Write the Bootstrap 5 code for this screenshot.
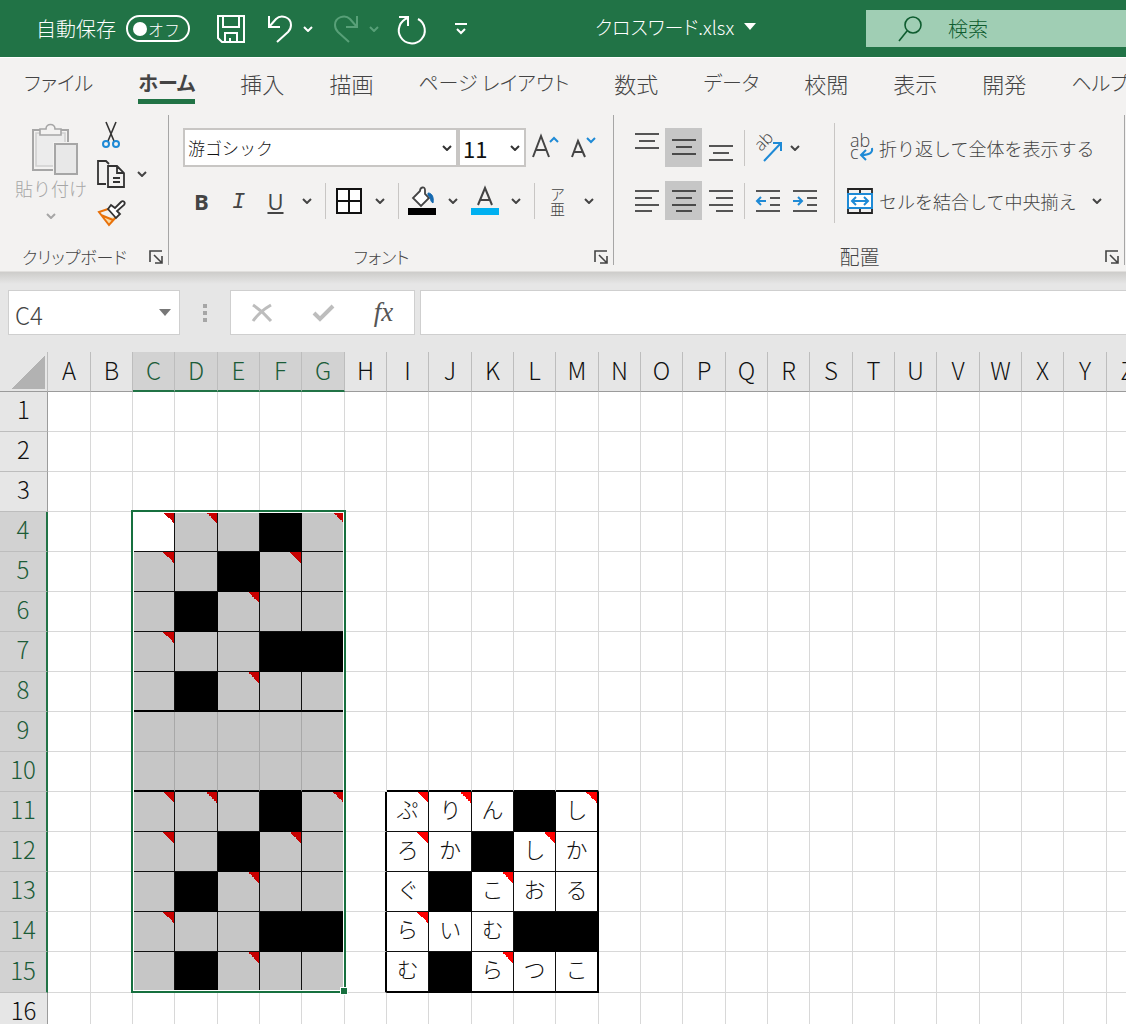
<!DOCTYPE html>
<html lang="ja">
<head>
<meta charset="utf-8">
<meta name="viewport" content="width=device-width, initial-scale=1">
<title>クロスワード.xlsx</title>
<link rel="stylesheet" href="https://cdn.jsdelivr.net/npm/bootstrap@5.3.0/dist/css/bootstrap.min.css">
<style>
:root{--xl-green:#217346;--xl-ink:#444;--xl-blue:#1e8ad6;--xl-chrome:#f3f2f1;--xl-head:#e6e6e6}
body{font-family:"Noto Sans CJK JP",sans-serif;font-weight:300;font-size:20px;line-height:24px;color:var(--xl-ink);background:#fff;font-feature-settings:"palt";fill:none;stroke:currentColor}
svg{display:block;flex:none;overflow:visible}
button{border:0;background:none;padding:0;color:inherit;font-weight:inherit}
.titlebar{height:57px;background:var(--xl-green);color:#fff;padding-left:36px;white-space:nowrap}
.titlebar>*{flex-shrink:0}
.autosave{gap:10px;margin-right:26px}
.toggle{width:64px;height:27px;border:2px solid #fff;border-radius:14px;padding:0 8px 0 5px;font-size:16px}
.toggle i{width:14px;height:14px;border-radius:50%;background:#fff}
.qa{width:30px;height:40px}
.qa-chev{width:26px;height:40px}
.gap-wide{margin-left:19px}
.gap-near{margin-left:10px}
.off{color:#58a078}
.doc{margin-left:119px;width:160px;gap:10px;font-size:19px;padding-bottom:4px}
.search{height:37px;background:#a0ceb4;color:#0e5c2f;padding-left:32px;gap:24px;margin-left:111px}
.search input{border:0;background:none;color:inherit;outline:0;width:0;font-weight:300}
.search input::placeholder{color:#0e5c2f;opacity:1}
.tabs{height:53px;background:var(--xl-chrome);border-top:1px solid #fff;padding-left:24px;gap:45px;overflow:hidden}
.tabs a{color:var(--xl-ink);text-decoration:none;white-space:nowrap;font-size:22px;height:46px;line-height:50px}
.tabs a.kana{font-size:20px}
.tabs a.on{font-weight:700;border-bottom:5px solid var(--xl-green)}
.ribbon{background:var(--xl-chrome);height:162px;padding-top:5px;border-bottom:1px solid #e1dfdd;overflow:hidden}
.grp{height:150px;border-right:1px solid #a6a6a6;flex:none}
.grp-foot{height:16px;font-size:17px;padding-right:5px}
.grp-foot .kanji{font-size:20px}
.grp-clip{width:169px}
.grp-font{width:445px}
.grp-align{width:511px}
.tools{padding-top:13px;padding-left:14px;gap:14px}
.tool{width:37px;height:39px}
.tool.on{background:#c6c6c6}
.chev{width:26px;height:39px}
.chev.tight{width:18px}
.bar{width:10px;height:36px}
.bar::before{content:"";display:block;width:1px;height:100%;background:#c8c6c4;margin:auto}
.bar.tall{height:100px;width:22px}
.picker{border:2px solid #c8c6c4;border-radius:0;height:39px;padding:0 0 0 3px;font-size:17px;color:#111;background:#fff url("data:image/svg+xml,%3Csvg xmlns='http://www.w3.org/2000/svg' width='10' height='6'%3E%3Cpath d='M1 1l4 4 4-4' fill='none' stroke='%23333' stroke-width='2'/%3E%3C/svg%3E") no-repeat right 4px center;appearance:none;font-weight:300}
.picker-font{width:275px}
.picker-size{width:68px;font-size:22px;font-weight:400}
.letter{font-family:"Open Sans",sans-serif;font-size:22px;font-weight:400}
.mono-i{font-family:"Liberation Mono",monospace}
.paste{width:70px;color:#a6a6a6;font-size:18px;margin:0 6px 0 16px}
.ruby-ico{font-size:15px;line-height:15px}
.wide{height:39px;gap:6px;white-space:nowrap;font-size:18px}
.tools.text-tools{padding-left:2px}
.fbar{height:80px;background:linear-gradient(#cdccca,#e6e6e6 12px);padding:18px 0 0 8px}
.box{height:45px;border:1px solid #cfcfcf;background:#fff}
.namebox{width:172px;padding:0 8px 0 6px}
.namebox input{border:0;outline:0;min-width:0;width:100%;font-size:24px;font-weight:300;color:var(--xl-ink);padding:4px 0 0}
.dots{width:50px;color:#a6a6a6}
.fx{width:185px;margin-right:5px;color:#bdbdbd}
.fx button{width:61px;height:43px}
.fx .fn{font:italic 27px "Liberation Serif",serif;color:#555}
.formula{border-right:0;outline:0;min-width:0}
.sheet{table-layout:fixed;border-collapse:separate;border-spacing:0;width:1149px;color:#111;font-size:24px;line-height:32px;text-align:center}
.sheet th{background:var(--xl-head);font-weight:300;padding:0}
.sheet td{border-right:1px solid #d8d8d8;border-bottom:1px solid #d8d8d8;padding:0 0 7px;font-size:22px;background-repeat:no-repeat;background-position:right top;background-size:11px 11px;position:relative}
.sheet tr{height:40px}
.sheet thead th{border-right:1px solid #bdbdbd;border-bottom:1px solid #9b9b9b;padding-bottom:3px}
.sheet thead th:first-child{padding:0}
.sheet tbody th{border-right:1px solid #9b9b9b;border-bottom:1px solid #bdbdbd;padding-bottom:5px}
.sheet thead th.hot{background-color:#d2d2d2;color:#1c5c38;border-bottom:2px solid var(--xl-green)}
.sheet tbody th.hot{background-color:#d2d2d2;color:#1c5c38;border-right:2px solid var(--xl-green)}
.sheet .sel{background-color:#c6c6c6;border-color:#a8a8a8}
.sheet .ink-r{border-right-color:#111}
.sheet .ink-b{border-bottom-color:#111}
.sheet .thick-r{border-right:2px solid #000}
.sheet .thick-b{border-bottom:2px solid #000}
.sheet .fill{background-color:#000;border-color:#000}
.sheet .note{background-image:linear-gradient(to top right,transparent 50%,#f00 50%)}
.sheet .sel.note{background-image:linear-gradient(to top right,transparent 50%,#c80000 50%)}
.sheet .active{background-color:#fff}
.corner{width:33px;height:33px;margin:2px 0 0 12px;background:linear-gradient(to bottom right,transparent 50%,#b2b2b2 50%)}
.range{position:absolute;left:-2px;top:-2px;width:215px;height:483px;border:2px solid #17703f;box-shadow:inset 0 0 0 1px #fff;z-index:2;pointer-events:none}
.range::after{content:"";position:absolute;right:-4px;bottom:-4px;width:8px;height:8px;background:#17703f;border:1px solid #fff}
</style>
</head>
<body class="vh-100 overflow-hidden d-flex flex-column">

<svg width="0" height="0" class="position-absolute" aria-hidden="true">
  <symbol id="chev" viewBox="0 0 10 6"><path d="M1 1l4 4 4-4" stroke-width="2"/></symbol>
  <symbol id="launch" viewBox="0 0 14 14"><path d="M1 12V1h12M5 5l8 8M13 6v7H6" stroke-width="1.6"/></symbol>
</svg>

<header class="titlebar d-flex align-items-center flex-shrink-0">
  <div class="autosave d-flex align-items-center">
    <span>自動保存</span>
    <button class="toggle d-flex align-items-center justify-content-between text-white" role="switch" aria-checked="false"><i></i>オフ</button>
  </div>
  <button class="qa d-flex align-items-center justify-content-center" aria-label="上書き保存"><svg width="28" height="28" viewBox="0 0 28 28" stroke-width="2"><path d="M1 1h26v26H5l-4-4zM6 1v11h16V1M8 27v-9h12v9M13 27v-4"/></svg></button>
  <button class="qa gap-wide d-flex align-items-center justify-content-center" aria-label="元に戻す"><svg width="26" height="28" viewBox="0 0 26 28" stroke-width="2"><path d="M2 1v11h11M2 12L9 4c5-5 15-2 15 6 0 3-1 5-3 7L10 27"/></svg></button>
  <button class="qa-chev d-flex align-items-center justify-content-center" aria-label="元に戻す履歴"><svg width="10" height="6"><use href="#chev"/></svg></button>
  <button class="qa off gap-near d-flex align-items-center justify-content-center" aria-label="やり直し"><svg width="26" height="28" viewBox="0 0 26 28" stroke-width="2"><path d="M24 1v11H13M24 12L17 4C12-1 2 2 2 10c0 3 1 5 3 7l11 10"/></svg></button>
  <button class="qa-chev off d-flex align-items-center justify-content-center" aria-label="やり直し履歴"><svg width="10" height="6"><use href="#chev"/></svg></button>
  <button class="qa gap-near d-flex align-items-center justify-content-center" aria-label="繰り返し"><svg width="30" height="30" viewBox="0 0 30 30" stroke-width="2"><path d="M2 3h9v9M11 4A13 13 0 1 0 21 5"/></svg></button>
  <button class="qa gap-wide d-flex align-items-center justify-content-center" aria-label="クイック アクセス ツール バーのカスタマイズ"><svg width="14" height="12" viewBox="0 0 14 12" stroke-width="2"><path d="M1 1h12M3 6l4 4 4-4"/></svg></button>
  <div class="doc d-flex align-items-center"><span>クロスワード.xlsx</span><svg width="12" height="7" viewBox="0 0 12 7"><path d="M0 0h12L6 7z" fill="currentColor" stroke="none"/></svg></div>
  <label class="search d-flex align-items-center flex-fill"><svg width="24" height="26" viewBox="0 0 24 26" stroke-width="1.6"><circle cx="15" cy="9" r="8"/><path d="M9 15L1 25"/></svg><input type="search" class="flex-fill" placeholder="検索" aria-label="検索"></label>
</header>

<nav class="tabs d-flex flex-shrink-0">
  <a href="#" class="kana">ファイル</a><a href="#" class="kana on">ホーム</a><a href="#">挿入</a><a href="#">描画</a><a href="#" class="kana">ページ レイアウト</a><a href="#">数式</a><a href="#" class="kana">データ</a><a href="#">校閲</a><a href="#">表示</a><a href="#">開発</a><a href="#" class="kana">ヘルプ</a>
</nav>

<section class="ribbon d-flex flex-shrink-0">
  <div class="grp grp-clip d-flex flex-column">
    <div class="d-flex flex-fill">
      <button class="paste d-flex flex-column align-items-center pt-2 text-nowrap"><svg width="48" height="52" viewBox="0 0 48 52" stroke-width="1.6" class="ms-2"><path d="M22 47H2V7h8M30 7h7v13" stroke-width="2"/><path d="M22 43H5V10h29v10" fill="#ececec" stroke="#d0d0d0"/><path d="M9 12V6h6c0-6 9-6 9 0h6v6z" fill="#f3f2f1"/><path d="M22 19h26v33H22z" fill="#f3f2f1" stroke="none"/><path d="M24 21h22v30H24z" fill="#e8e8e8" stroke-width="2"/></svg><span class="lh-1 mt-1">貼り付け</span><svg width="10" height="6" class="mt-3"><use href="#chev"/></svg></button>
      <div class="d-flex flex-column">
        <button class="tool d-flex align-items-center justify-content-center" aria-label="切り取り"><svg width="20" height="28" viewBox="0 0 20 28" stroke-width="1.6"><path d="M5 1l8 19M15 1L7 20" stroke="#333"/><circle cx="5" cy="23" r="3" stroke="#1e8ad6" stroke-width="2"/><circle cx="15" cy="23" r="3" stroke="#1e8ad6" stroke-width="2"/></svg></button>
        <div class="d-flex"><button class="tool d-flex align-items-center justify-content-center" aria-label="コピー"><svg width="28" height="28" viewBox="0 0 28 28" stroke-width="1.8" stroke="#333"><path d="M9 24H1V1h8l3 3M11 6h9l7 7v14H11zM20 6v7h7M16 18h7M16 22h7"/></svg></button><button class="chev d-flex align-items-center justify-content-center" aria-label="コピーのオプション"><svg width="10" height="6"><use href="#chev"/></svg></button></div>
        <button class="tool d-flex align-items-center justify-content-center" aria-label="書式のコピー"><svg width="28" height="26" viewBox="0 0 28 26" stroke-width="1.8"><path d="M8 18l12-1-8 8z" fill="#fcd9a0" stroke="none"/><path d="M11 9L2 12l10 13 8-9M4 15l12 5" stroke="#e8710a" stroke-width="2"/><path d="M11 9l3-4 4 3 6-6c2-2 5 0 3 3l-7 6 3 3-4 4z" stroke="#333" fill="#fff"/></svg></button>
      </div>
    </div>
    <div class="grp-foot d-flex align-items-center"><span class="flex-fill text-center">クリップボード</span><button aria-label="クリップボードの設定"><svg width="14" height="14"><use href="#launch"/></svg></button></div>
  </div>

  <div class="grp grp-font d-flex flex-column">
    <div class="tools flex-fill d-flex flex-column">
      <div class="d-flex">
        <select class="picker picker-font" aria-label="フォント"><option>游ゴシック</option></select>
        <select class="picker picker-size" aria-label="フォント サイズ"><option>11</option></select>
        <button class="tool d-flex align-items-center justify-content-center" aria-label="フォント サイズの拡大"><svg width="28" height="26" viewBox="0 0 28 26" stroke-width="2"><path d="M2 22L10 1l8 21M5 15h10"/><path d="M19 7l4-4 4 4" stroke="#1e8ad6"/></svg></button>
        <button class="tool d-flex align-items-center justify-content-center" aria-label="フォント サイズの縮小"><svg width="26" height="24" viewBox="0 0 26 24" stroke-width="2"><path d="M3 21L9 5l7 16M5 16h9"/><path d="M18 2l4 4 4-4" stroke="#1e8ad6"/></svg></button>
      </div>
      <div class="d-flex align-items-center">
        <button class="tool letter fw-bold" aria-label="太字">B</button>
        <button class="tool letter fst-italic" aria-label="斜体"><span class="mono-i">I</span></button>
        <button class="tool letter text-decoration-underline" aria-label="下線">U</button>
        <button class="chev d-flex align-items-center justify-content-center" aria-label="下線の種類"><svg width="10" height="6"><use href="#chev"/></svg></button>
        <span class="bar"></span>
        <button class="tool d-flex align-items-center justify-content-center" aria-label="罫線"><svg width="26" height="26" viewBox="0 0 26 26" stroke="#111" stroke-width="2"><path d="M1 1h24v24H1zM13 1v24M1 13h24" fill="#fff"/></svg></button>
        <button class="chev d-flex align-items-center justify-content-center" aria-label="罫線の種類"><svg width="10" height="6"><use href="#chev"/></svg></button>
        <span class="bar"></span>
        <button class="tool d-flex align-items-center justify-content-center" aria-label="塗りつぶしの色"><svg width="28" height="28" viewBox="0 0 28 28" stroke-width="1.8"><path d="M0 21h28v7H0z" fill="#000" stroke="none"/><path d="M12 4l-7 7 8 8 8-8-4-4V3c0-4-5-3-5 1z" fill="#fff"/><path d="M20 6c4 0 6 4 5 10-3-1-2-6-5-8z" fill="#1569b0" stroke="#1569b0" stroke-width="1"/></svg></button>
        <button class="chev d-flex align-items-center justify-content-center" aria-label="塗りつぶしの色の一覧"><svg width="10" height="6"><use href="#chev"/></svg></button>
        <button class="tool d-flex align-items-center justify-content-center" aria-label="フォントの色"><svg width="28" height="28" viewBox="0 0 28 28" stroke-width="2"><path d="M0 21h28v7H0z" fill="#00b0f0" stroke="none"/><path d="M7 18l7-17 7 17M9 13h10"/></svg></button>
        <button class="chev d-flex align-items-center justify-content-center" aria-label="フォントの色の一覧"><svg width="10" height="6"><use href="#chev"/></svg></button>
        <span class="bar"></span>
        <button class="tool ruby-ico" aria-label="ふりがな">ア<br>亜</button>
        <button class="chev d-flex align-items-center justify-content-center" aria-label="ふりがなの設定"><svg width="10" height="6"><use href="#chev"/></svg></button>
      </div>
    </div>
    <div class="grp-foot d-flex align-items-center"><span class="flex-fill text-center">フォント</span><button aria-label="フォントの設定"><svg width="14" height="14"><use href="#launch"/></svg></button></div>
  </div>

  <div class="grp grp-align d-flex flex-column">
    <div class="d-flex flex-fill">
      <div class="tools d-flex flex-column">
        <div class="d-flex align-items-center">
          <button class="tool d-flex justify-content-center pt-1" aria-label="上揃え"><svg width="24" height="26" viewBox="0 0 24 26" stroke="#222" stroke-width="1.6"><path d="M0 2h24M4 9h16M0 16h24"/></svg></button>
          <button class="tool on d-flex align-items-center justify-content-center" aria-label="上下中央揃え"><svg width="24" height="26" viewBox="0 0 24 26" stroke="#222" stroke-width="1.6"><path d="M0 5h24M4 12h16M0 19h24"/></svg></button>
          <button class="tool d-flex align-items-end justify-content-center pb-1" aria-label="下揃え"><svg width="24" height="26" viewBox="0 0 24 26" stroke="#222" stroke-width="1.6"><path d="M0 9h24M4 16h16M0 23h24"/></svg></button>
          <span class="bar"></span>
          <button class="tool d-flex align-items-center justify-content-center" aria-label="方向"><svg width="30" height="30" viewBox="0 0 30 30" stroke-width="1.8"><text x="8" y="19" transform="rotate(-45 8 19)" font-size="17" font-family="Open Sans" fill="#444" stroke="none">ab</text><path d="M11 28L28 10M20 10h8v8" stroke="#1e8ad6" stroke-width="2"/></svg></button>
          <button class="chev tight d-flex align-items-center justify-content-center" aria-label="方向の種類"><svg width="10" height="6"><use href="#chev"/></svg></button>
        </div>
        <div class="d-flex align-items-center">
          <button class="tool d-flex align-items-center justify-content-center" aria-label="左揃え"><svg width="24" height="24" viewBox="0 0 24 24" stroke="#222" stroke-width="1.6"><path d="M0 2h24M0 9h17M0 16h24M0 22h17"/></svg></button>
          <button class="tool on d-flex align-items-center justify-content-center" aria-label="中央揃え"><svg width="24" height="24" viewBox="0 0 24 24" stroke="#222" stroke-width="1.6"><path d="M0 2h24M4 9h16M0 16h24M4 22h16"/></svg></button>
          <button class="tool d-flex align-items-center justify-content-center" aria-label="右揃え"><svg width="24" height="24" viewBox="0 0 24 24" stroke="#222" stroke-width="1.6"><path d="M0 2h24M7 9h17M0 16h24M7 22h17"/></svg></button>
          <span class="bar"></span>
          <button class="tool d-flex align-items-center justify-content-center" aria-label="インデントを減らす"><svg width="24" height="24" viewBox="0 0 24 24" stroke="#222" stroke-width="1.6"><path d="M0 2h24M14 9h10M14 16h10M0 22h24"/><path d="M10 12H1M5 8l-4 4 4 4" stroke="#1e8ad6" stroke-width="2"/></svg></button>
          <button class="tool d-flex align-items-center justify-content-center" aria-label="インデントを増やす"><svg width="24" height="24" viewBox="0 0 24 24" stroke="#222" stroke-width="1.6"><path d="M0 2h24M14 9h10M14 16h10M0 22h24"/><path d="M0 12h9M5 8l4 4-4 4" stroke="#1e8ad6" stroke-width="2"/></svg></button>
        </div>
      </div>
      <span class="bar tall align-self-start mt-2"></span>
      <div class="tools text-tools d-flex flex-column">
        <button class="wide d-flex align-items-center"><svg width="26" height="30" viewBox="0 0 26 30" stroke-width="2"><g font-size="18" font-family="Open Sans" fill="#444" stroke="none"><text x="3" y="14">ab</text><text x="3" y="26">c</text></g><path d="M25 15c1 5-3 7-10 7M19 17l-5 5 5 5" stroke="#1e8ad6"/></svg>折り返して全体を表示する</button>
        <div class="d-flex"><button class="wide d-flex align-items-center"><svg width="26" height="26" viewBox="0 0 26 26" stroke="#222" stroke-width="1.8"><path d="M1 1h24v24H1zM13 1v24"/><path d="M1 6h24v14H1z" fill="#fff" stroke="#1e8ad6" stroke-width="2"/><path d="M5 13h16M9 9l-4 4 4 4M17 9l4 4-4 4" stroke="#1e8ad6" stroke-width="2"/></svg>セルを結合して中央揃え</button><button class="chev d-flex align-items-center justify-content-center ms-2" aria-label="結合の種類"><svg width="10" height="6"><use href="#chev"/></svg></button></div>
      </div>
    </div>
    <div class="grp-foot d-flex align-items-center"><span class="kanji flex-fill text-center">配置</span><button aria-label="配置の設定"><svg width="14" height="14"><use href="#launch"/></svg></button></div>
  </div>
</section>

<section class="fbar d-flex align-items-start flex-shrink-0">
  <div class="box namebox d-flex align-items-center"><input value="C4" aria-label="名前ボックス"><svg width="12" height="7" viewBox="0 0 12 7"><path d="M0 0h12L6 7z" fill="#777" stroke="none"/></svg></div>
  <div class="dots box border-0 bg-transparent d-flex align-items-center justify-content-center"><svg width="4" height="18" viewBox="0 0 4 18"><path d="M0 0h4v4H0zM0 7h4v4H0zM0 14h4v4H0z" fill="#a6a6a6" stroke="none"/></svg></div>
  <div class="box fx d-flex">
    <button class="d-flex align-items-center justify-content-center" aria-label="キャンセル"><svg width="20" height="18" viewBox="0 0 20 18" stroke-width="3"><path d="M1 1c6 4 12 9 18 16M19 1C12 5 6 10 1 17"/></svg></button>
    <button class="d-flex align-items-center justify-content-center" aria-label="入力"><svg width="22" height="18" viewBox="0 0 22 18" stroke-width="4"><path d="M2 9l6 6L21 2"/></svg></button>
    <button class="fn" aria-label="関数の挿入">fx</button>
  </div>
  <input class="box formula flex-fill" aria-label="数式バー">
</section>

<main class="flex-fill overflow-hidden">
  <table class="sheet"><colgroup id="cols"></colgroup><thead><tr id="heads"></tr></thead><tbody id="cells"></tbody></table>
</main>

<script>
const letters = 'ABCDEFGHIJKLMNOPQRSTUVWXYZ'.split('');
// "#" is a blocked square, "*" a square whose clue is held in a comment
const shape = ['**.#*', '*.#*.', '.#*..', '*..##', '.#*..'];
const answers = ['ぷりん し', 'ろか しか', 'ぐ こおる', 'らいむ  ', 'む らつこ'];
const blocks = [{c: 2, r: 4}, {c: 2, r: 11}, {c: 8, r: 11, words: answers}];

let cols = '<col style="width:48px">', heads = '<th><div class="corner"></div></th>';
letters.forEach((l, i) => {
  cols += `<col style="width:${i % 3 ? 42 : 43}px">`;
  heads += `<th scope="col" class="${i > 1 && i < 7 ? 'hot' : ''}">${l}</th>`;
});
document.getElementById('cols').innerHTML = cols;
document.getElementById('heads').innerHTML = heads;

let rows = '';
for (let r = 1; r <= 17; r++) {
  rows += `<tr><th scope="row" class="${r > 3 && r < 16 ? 'hot' : ''}">${r}</th>`;
  for (let c = 0; c < 26; c++) {
    const cls = [];
    let text = '';
    if (c > 1 && c < 7 && r > 3 && r < 16) cls.push('sel');
    for (const b of blocks) {
      const x = c - b.c, y = r - b.r;
      if (x >= 0 && x < 5 && y >= 0 && y < 5) {
        cls.push('ink-r', 'ink-b');
        if (shape[y][x] === '#') cls.push('fill');
        if (shape[y][x] === '*') cls.push('note');
        if (y === 4) cls.push('thick-b');
        if (b.words) { text = b.words[y][x].trim(); if (x === 4) cls.push('thick-r'); }
      }
      if (b.words && x === -1 && y >= 0 && y < 5) cls.push('thick-r');
      if (b.r === 11 && y === -1 && x >= 0 && x < 5) cls.push('thick-b');
    }
    if (c === 2 && r === 4) { cls.push('active'); text = '<div class="range"></div>'; }
    rows += `<td class="${cls.join(' ')}">${text}</td>`;
  }
  rows += '</tr>';
}
document.getElementById('cells').innerHTML = rows;
</script>
<script src="https://cdn.jsdelivr.net/npm/bootstrap@5.3.0/dist/js/bootstrap.bundle.min.js"></script>
</body>
</html>
